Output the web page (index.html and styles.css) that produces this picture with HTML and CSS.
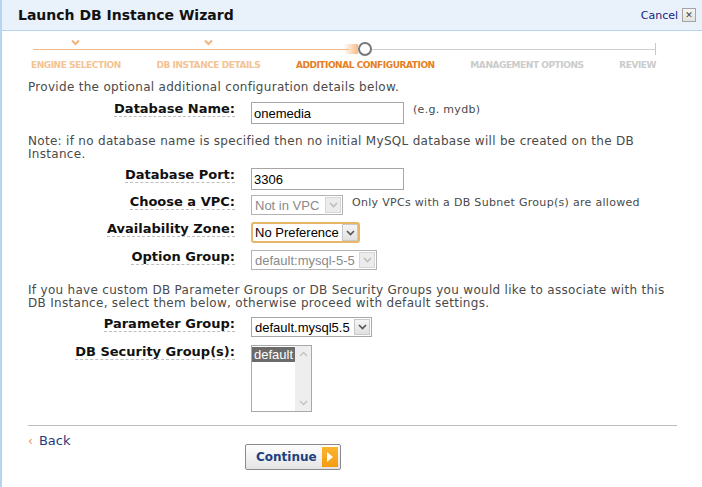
FILE: index.html
```html
<!DOCTYPE html>
<html>
<head>
<meta charset="utf-8">
<title>Launch DB Instance Wizard</title>
<link rel="stylesheet" href="styles.css">
</head>
<body>
<div class="wizard">
  <header class="head">
    <h1>Launch DB Instance Wizard</h1>
    <div class="cancel"><a class="cancel-link">Cancel</a><span class="xbtn">&#x2715;</span></div>
  </header>

  <ol class="steps">
    <li class="step done"><span class="markbox"><svg class="check" width="9" height="7" viewBox="0 0 9 7"><polyline points="1,1.5 4.5,5 8,1.5" fill="none" stroke="#f1b47c" stroke-width="2"/></svg></span><span class="lbl">ENGINE SELECTION</span></li>
    <li class="step done"><span class="markbox"><svg class="check" width="9" height="7" viewBox="0 0 9 7"><polyline points="1,1.5 4.5,5 8,1.5" fill="none" stroke="#f1b47c" stroke-width="2"/></svg></span><span class="lbl">DB INSTANCE DETAILS</span></li>
    <li class="step current"><span class="markbox"><span class="glow"></span><span class="circle"></span></span><span class="lbl">ADDITIONAL CONFIGURATION</span></li>
    <li class="step todo"><span class="markbox"></span><span class="lbl">MANAGEMENT OPTIONS</span></li>
    <li class="step todo"><span class="markbox"></span><span class="lbl">REVIEW</span></li>
  </ol>

  <div class="form">
    <p class="intro">Provide the optional additional configuration details below.</p>

    <div class="row r1">
      <label class="lab"><span>Database Name:</span></label>
      <div class="ctl"><input class="text" type="text" value="onemedia"><span class="hint">(e.g. mydb)</span></div>
    </div>

    <p class="note">Note: if no database name is specified then no initial MySQL database will be created on the DB Instance.</p>

    <div class="row r2">
      <label class="lab"><span>Database Port:</span></label>
      <div class="ctl"><input class="text" type="text" value="3306"></div>
    </div>

    <div class="row r3">
      <label class="lab"><span>Choose a VPC:</span></label>
      <div class="ctl">
        <div class="select disabled w-vpc"><span class="val">Not in VPC</span><span class="arrow"><svg width="9" height="6" viewBox="0 0 9 6"><polyline points="1,1 4.5,4.5 8,1" fill="none" stroke="currentColor" stroke-width="1.6"/></svg></span></div>
        <span class="hint hint-vpc">Only VPCs with a DB Subnet Group(s) are allowed</span>
      </div>
    </div>

    <div class="row r4">
      <label class="lab"><span>Availability Zone:</span></label>
      <div class="ctl">
        <div class="select focus w-az"><span class="val">No Preference</span><span class="arrow"><svg width="9" height="6" viewBox="0 0 9 6"><polyline points="1,1 4.5,4.5 8,1" fill="none" stroke="currentColor" stroke-width="1.6"/></svg></span></div>
      </div>
    </div>

    <div class="row r5">
      <label class="lab"><span>Option Group:</span></label>
      <div class="ctl">
        <div class="select disabled w-opt"><span class="val">default:mysql-5-5</span><span class="arrow"><svg width="9" height="6" viewBox="0 0 9 6"><polyline points="1,1 4.5,4.5 8,1" fill="none" stroke="currentColor" stroke-width="1.6"/></svg></span></div>
      </div>
    </div>

    <p class="note note2">If you have custom DB Parameter Groups or DB Security Groups you would like to associate with this DB Instance, select them below, otherwise proceed with default settings.</p>

    <div class="row r6">
      <label class="lab"><span>Parameter Group:</span></label>
      <div class="ctl">
        <div class="select w-par"><span class="val">default.mysql5.5</span><span class="arrow"><svg width="9" height="6" viewBox="0 0 9 6"><polyline points="1,1 4.5,4.5 8,1" fill="none" stroke="currentColor" stroke-width="1.6"/></svg></span></div>
      </div>
    </div>

    <div class="row r7">
      <label class="lab"><span>DB Security Group(s):</span></label>
      <div class="ctl">
        <div class="listbox">
          <div class="opts"><div class="opt sel">default</div></div>
          <div class="scroll">
            <svg width="9" height="6" viewBox="0 0 9 6"><polyline points="1,5 4.5,1.5 8,5" fill="none" stroke="currentColor" stroke-width="1.4"/></svg>
            <svg width="9" height="6" viewBox="0 0 9 6"><polyline points="1,1 4.5,4.5 8,1" fill="none" stroke="currentColor" stroke-width="1.4"/></svg>
          </div>
        </div>
      </div>
    </div>

    <hr class="rule">

    <div class="footer">
      <a class="back"><span class="lt">&lsaquo;</span> Back</a>
      <button class="btn" type="button"><span class="btn-txt">Continue</span><span class="play"><svg width="8" height="12" viewBox="0 0 8 12"><polygon points="1,1 7,6 1,11" fill="#fff"/></svg></span></button>
    </div>
  </div>
</div>
</body>
</html>
```

FILE: styles.css
```css
html, body {
  margin: 0;
  padding: 0;
  background: #fff;
}
body {
  font-family: "DejaVu Sans", Verdana, sans-serif;
  font-size: 12px;
  letter-spacing: 0.3px;
  color: #4a4a4a;
}
.wizard {
  height: 487px;
  box-sizing: border-box;
  border-left: 2px solid #b7d5f1;
}

/* header */
.head {
  height: 30px;
  background: #e9f1fb;
  border-bottom: 1px solid #b5d5f1;
  display: flex;
  align-items: center;
  justify-content: space-between;
  padding: 0 6px 0 16px;
}
.head h1 {
  margin: 0;
  font-size: 14px;
  font-weight: bold;
  letter-spacing: 0;
  color: #111;
}
.cancel {
  display: flex;
  align-items: center;
  gap: 4px;
}
.cancel-link {
  font-size: 11px;
  letter-spacing: 0;
  color: #1b1b80;
}
.xbtn {
  width: 12px;
  height: 12px;
  border: 1px solid #a4a4a4;
  background: linear-gradient(#f6f6f6, #e2e2e2);
  color: #444;
  font-size: 9px;
  line-height: 12px;
  letter-spacing: 0;
  text-align: center;
  font-weight: bold;
}

/* steps */
.steps {
  list-style: none;
  margin: 0 0 0 29px;
  padding: 0;
  width: 625px;
  display: flex;
  justify-content: space-between;
  background:
    linear-gradient(#f0b98c, #f0b98c) no-repeat 2px 18px / 316px 1px,
    linear-gradient(#cfcfcf, #cfcfcf) no-repeat 330px 18px / 294px 1px,
    linear-gradient(#c8c8c8, #c8c8c8) no-repeat 624px 12px / 1px 12px;
}
.step {
  display: flex;
  flex-direction: column;
  align-items: center;
}
.markbox {
  height: 28px;
  display: flex;
  justify-content: center;
  align-items: flex-start;
}
.check {
  margin-top: 8px;
}
.glow {
  width: 14px;
  height: 10px;
  margin-top: 13px;
  margin-left: -14px;
  background: linear-gradient(to right, rgba(248, 190, 140, 0), rgba(248, 180, 120, 0.9));
}
.circle {
  width: 10px;
  height: 10px;
  margin-top: 11px;
  border: 2px solid #777;
  border-radius: 50%;
  background: #fff;
}
.lbl {
  font-weight: bold;
  font-size: 9px;
  line-height: 12px;
  letter-spacing: -0.45px;
  white-space: nowrap;
}
.done .lbl { color: #f4c393; }
.current .lbl { color: #e67e22; }
.todo .lbl { color: #cbcbcb; }

/* form */
.form {
  margin-left: 26px;
  width: 649px;
}
.intro {
  margin: 9px 0 0;
  line-height: 14px;
}
.note {
  margin: 11px 0 0;
  line-height: 13px;
}
.note2 {
  margin-top: 14px;
}
.row {
  display: grid;
  grid-template-columns: 207px 1fr;
  column-gap: 16px;
  align-items: start;
}
.r1 { margin-top: 8px; }
.r2 { margin-top: 7px; }
.r3 { margin-top: 5px; }
.r4 { margin-top: 7px; }
.r5 { margin-top: 7px; }
.r6 { margin-top: 7px; }
.r7 { margin-top: 8px; }

.lab {
  text-align: right;
  font-weight: bold;
  font-size: 13px;
  line-height: 13px;
  letter-spacing: 0;
  color: #111;
}
.lab span {
  border-bottom: 1px dashed #bdbdbd;
}
.ctl {
  display: flex;
  align-items: flex-start;
}
.text {
  width: 153px;
  height: 22px;
  box-sizing: border-box;
  margin: 0;
  padding: 1px 2px 0;
  border: 1px solid #a6a6a6;
  font-family: "Liberation Sans", Arial, sans-serif;
  font-size: 13px;
  letter-spacing: 0;
  color: #000;
  outline: none;
}
.hint {
  font-size: 11px;
  line-height: 13px;
  letter-spacing: 0.3px;
  margin-left: 9px;
  padding-top: 1px;
}

.select {
  display: flex;
  align-items: center;
  box-sizing: border-box;
  height: 20px;
  border: 1px solid #a8a8a8;
  background: #fff;
  font-family: "Liberation Sans", Arial, sans-serif;
  font-size: 13px;
  letter-spacing: 0;
  color: #000;
}
.select .val {
  flex: 1;
  padding-left: 3px;
  white-space: nowrap;
  overflow: hidden;
}
.select .arrow {
  width: 14px;
  align-self: stretch;
  margin: 1px;
  border: 1px solid #c9c9c9;
  background: linear-gradient(#f5f5f5, #e1e1e1);
  display: flex;
  align-items: center;
  justify-content: center;
  color: #555;
}
.select.disabled {
  border-color: #b3b3b3;
  color: #8a8a8a;
}
.select.disabled .arrow {
  color: #bdbdbd;
  background: #ececec;
  border-color: #d6d6d6;
}
.select.focus {
  height: 21px;
  border: 2px solid #e7b667;
  border-radius: 3px;
}
.select.focus .val { padding-left: 2px; }
.select.focus .arrow { margin: 0; }
.w-vpc { width: 92px; }
.w-az { width: 109px; }
.w-opt { width: 126px; }
.w-par { width: 121px; }

.listbox {
  width: 61px;
  height: 67px;
  box-sizing: border-box;
  border: 1px solid #a9a9a9;
  display: flex;
  background: #fff;
}
.opts {
  flex: 1;
  padding-top: 1px;
}
.opt {
  font-family: "Liberation Sans", Arial, sans-serif;
  font-size: 13px;
  line-height: 15px;
  letter-spacing: 0;
  padding-left: 2px;
}
.opt.sel {
  background: #6b6b6b;
  color: #fff;
}
.scroll {
  width: 16px;
  background: #eeeeee;
  display: flex;
  flex-direction: column;
  justify-content: space-between;
  align-items: center;
  padding: 5px 0 5px;
  color: #c3c3c3;
}

.rule {
  margin: 13px 0 0;
  border: 0;
  border-top: 1px solid #bdbdbd;
  height: 0;
}
.footer {
  display: flex;
  align-items: flex-start;
  margin-top: 7px;
}
.back {
  width: 217px;
  flex: none;
  font-size: 13px;
  line-height: 16px;
  letter-spacing: 0;
  color: #1e3c7c;
}
.back .lt {
  color: #ea8a4c;
  font-size: 12px;
  margin-right: 2px;
}
.btn {
  margin: 11px 0 0;
  width: 96px;
  height: 26px;
  box-sizing: border-box;
  border: 1px solid #8a8a8a;
  border-radius: 2px;
  background: linear-gradient(#fefefe, #e4e4e4);
  display: flex;
  align-items: center;
  justify-content: space-between;
  padding: 0 2px 0 10px;
  font-family: "DejaVu Sans", Verdana, sans-serif;
  font-weight: bold;
  font-size: 12px;
  letter-spacing: 0;
  color: #1d3f80;
  cursor: pointer;
}
.play {
  width: 16px;
  height: 20px;
  background: linear-gradient(#fbb42e, #f59b12);
  display: flex;
  align-items: center;
  justify-content: center;
}
```
